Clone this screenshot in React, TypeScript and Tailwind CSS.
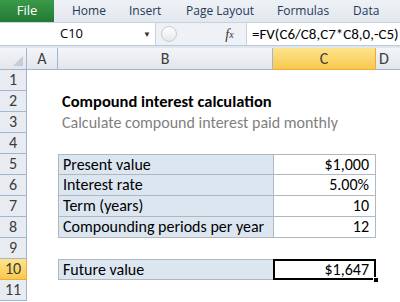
import React from "react";

const font = { fontFamily: "Calibri, Carlito, 'Liberation Sans', Arial, sans-serif" };

const tabs = [
  { label: "Home", w: "w-[57px]" },
  { label: "Insert", w: "w-[57px]" },
  { label: "Page Layout", w: "w-[91px]" },
  { label: "Formulas", w: "w-[76px]" },
  { label: "Data", w: "w-[40px]" },
];

type Row = { n: number; b?: React.ReactNode; c?: React.ReactNode; boxed?: boolean; selected?: boolean };

const rows: Row[] = [
  { n: 1 },
  { n: 2, b: <span className="font-bold text-black text-[16.5px]">Compound interest calculation</span> },
  { n: 3, b: <span className="text-[#7f7f7f] whitespace-nowrap">Calculate compound interest paid monthly</span> },
  { n: 4 },
  { n: 5, b: "Present value", c: "$1,000", boxed: true },
  { n: 6, b: "Interest rate", c: "5.00%", boxed: true },
  { n: 7, b: "Term (years)", c: "10", boxed: true },
  { n: 8, b: "Compounding periods per year", c: "12", boxed: true },
  { n: 9 },
  { n: 10, b: "Future value", c: "$1,647", boxed: true, selected: true },
  { n: 11 },
];

export default function App() {
  return (
    <div className="w-[400px] h-[302px] overflow-hidden bg-white text-[16px]" style={font}>
      {/* ribbon tabs */}
      <div className="h-[22px] flex items-stretch bg-gradient-to-b from-[#eef1f5] to-[#e3e8ee] text-[12px] text-[#1e395b]" style={{ fontFamily: "'Open Sans', sans-serif" }}>
        <div className="w-[54px] flex items-center justify-center bg-gradient-to-b from-[#3a9a4a] to-[#237a33] text-white text-[13px]">File</div>
        <div className="w-[18px]" />
        {tabs.map((t) => (
          <div key={t.label} className={t.w + " flex items-center whitespace-nowrap"}>
            {t.label}
          </div>
        ))}
      </div>

      {/* formula bar */}
      <div className="h-[24px] flex items-center bg-white border-t border-[#c5d2e0] border-b border-b-[#b9c9da]">
        <div className="w-[155px] flex items-center pl-[60px] pr-[4px] text-black">
          <span style={{ fontFamily: "'Open Sans', sans-serif" }} className="text-[13px]">C10</span>
          <span className="ml-auto text-[8px] text-[#333]">▼</span>
        </div>
        <div className="w-[58px] h-full flex items-center bg-[#eef1f5] border-l border-[#c5d2e0]">
          <div className="w-[16px] h-[16px] ml-[5px] rounded-full border border-[#c8ccd2] bg-gradient-to-b from-white to-[#e4e7eb]" />
        </div>
        <div className="w-[34px] h-full flex items-center justify-center bg-[#eef1f5] border-r border-[#c5d2e0] italic text-[14px] text-[#333]" style={{ fontFamily: "'Liberation Serif', serif" }}>
          f<span className="text-[10px]">x</span>
        </div>
        <div className="pl-[5px] text-[15px] text-black whitespace-nowrap">=FV(C6/C8,C7*C8,0,-C5)</div>
      </div>

      <div className="h-[2px] bg-[#e1e6ec]" />

      {/* sheet grid */}
      <div className="grid grid-cols-[27px_31px_215px_103px_24px]">
        {/* column headers */}
        <div className="h-[22px] relative bg-gradient-to-b from-[#f3f5f8] to-[#e2e6eb] border-b border-r border-[#9eb6ce]">
          <div className="absolute right-[3px] bottom-[3px] w-0 h-0 border-l-[10px] border-l-transparent border-b-[10px] border-b-[#c7ccd3]" />
        </div>
        <div className="h-[22px] flex items-center justify-center bg-gradient-to-b from-[#f3f5f8] to-[#e2e6eb] border-b border-r border-[#9eb6ce] text-[#3b3b3b]">A</div>
        <div className="h-[22px] flex items-center justify-center bg-gradient-to-b from-[#f3f5f8] to-[#e2e6eb] border-b border-r border-[#9eb6ce] text-[#3b3b3b]">B</div>
        <div className="h-[22px] flex items-center justify-center bg-gradient-to-b from-[#fde48c] to-[#f9c84a] border-b border-r border-[#f2a93b] text-[#3b3b3b]">C</div>
        <div className="h-[22px] flex items-center pl-[3px] bg-gradient-to-b from-[#f3f5f8] to-[#e2e6eb] border-b border-[#9eb6ce] text-[#3b3b3b]">D</div>

        {rows.map((r) => (
          <React.Fragment key={r.n}>
            <div
              className={
                r.selected
                  ? "h-[21px] flex items-center justify-center bg-gradient-to-b from-[#fde48c] to-[#f9c84a] border-b border-r border-[#f2a93b] text-[#3b3b3b]"
                  : "h-[21px] flex items-center justify-center bg-[#e8ecf2] border-b border-r border-[#9eb6ce] text-[#3b3b3b]"
              }
            >
              {r.n}
            </div>
            <div className="h-[21px]" />
            <div
              className={
                r.boxed
                  ? "h-[21px] flex items-center pl-[4px] bg-[#dce6f1] border-l border-b border-[#b0b7bf] text-black whitespace-nowrap" +
                    (r.n === 5 || r.n === 10 ? " border-t" : "")
                  : "h-[21px] flex items-center pl-[4px] whitespace-nowrap"
              }
            >
              {r.b}
            </div>
            <div
              className={
                r.boxed
                  ? "h-[21px] relative flex items-center justify-end pr-[6px] bg-white border-l border-r border-b border-[#b0b7bf] text-black" +
                    (r.n === 5 || r.n === 10 ? " border-t" : "")
                  : "h-[21px]"
              }
            >
              {r.c}
              {r.selected && (
                <>
                  <div className="absolute -left-[1px] -top-[1px] -right-[1px] -bottom-[1px] border-2 border-black" />
                  <div className="absolute -right-[4px] -bottom-[4px] w-[6px] h-[6px] bg-black border border-white" />
                </>
              )}
            </div>
            <div className="h-[21px]" />
          </React.Fragment>
        ))}
      </div>
    </div>
  );
}
